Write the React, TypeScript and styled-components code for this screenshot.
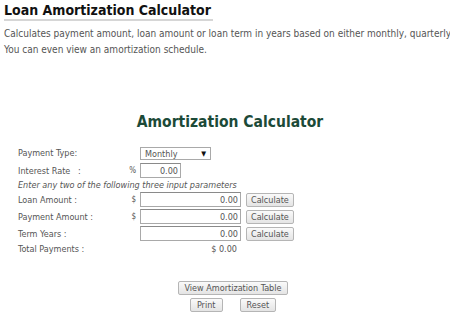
import React from "react";
import styled, { createGlobalStyle } from "styled-components";

const GlobalStyle = createGlobalStyle`
  html, body {
    margin: 0;
    padding: 0;
    background: #fff;
    overflow: hidden;
  }
  body {
    font-family: "DejaVu Sans Condensed", "DejaVu Sans", sans-serif;
    color: #555;
  }
`;

const Page = styled.main`
  width: 450px;
  height: 316px;
  padding: 0 0 0 4px;
  box-sizing: border-box;
  overflow: hidden;
`;

const Title = styled.h1`
  margin: 0;
  display: inline-block;
  font-size: 14px;
  font-weight: bold;
  color: #111;
  line-height: 16px;
  padding: 0 2px 1px 0;
  border-bottom: 2px solid #d6d6d6;
  white-space: nowrap;
`;

const Intro = styled.p`
  margin: 5px 0 0;
  font-size: 10px;
  line-height: 16px;
  color: #555;
  white-space: nowrap;
`;

const Calculator = styled.section`
  margin: 54px 0 0 14px;
  width: 424px;
`;

const Heading = styled.h2`
  margin: 0 0 13px;
  text-align: center;
  font-size: 15.5px;
  line-height: 20px;
  font-weight: bold;
  color: #1c4a38;
  white-space: nowrap;
`;

const Grid = styled.div`
  display: grid;
  grid-template-columns: 108px 14px auto 1fr;
  justify-items: start;
  align-items: center;
  row-gap: 2px;
  font-size: 9px;
  color: #555;
`;

const Label = styled.span`
  white-space: nowrap;
`;

const Unit = styled.span`
  justify-self: end;
  padding-right: 4px;
  font-size: 8px;
`;

const Note = styled.div`
  grid-column: 1 / -1;
  font-style: italic;
  font-size: 9px;
  color: #555;
  white-space: nowrap;
`;

const Field = styled.input<{ $w: number }>`
  width: ${(p) => p.$w}px;
  height: 15px;
  box-sizing: border-box;
  border: 1px solid #a9a9a9;
  border-top-color: #8a8a8a;
  padding: 0 2px;
  text-align: right;
  font-family: inherit;
  font-size: 9px;
  color: #555;
  background: #fff;
`;

const Select = styled.div`
  width: 71px;
  height: 13px;
  box-sizing: border-box;
  border: 1px solid #a9a9a9;
  display: flex;
  align-items: center;
  justify-content: space-between;
  padding: 0 4px;
  font-size: 9px;
  color: #555;
  margin: 2px 0 1px;
`;

const Arrow = styled.span`
  font-size: 7px;
  color: #111;
`;

const Button = styled.button<{ $pad?: number }>`
  font-family: inherit;
  font-size: 9px;
  color: #555;
  height: 14px;
  padding: 0 ${(p) => p.$pad ?? 5}px;
  border: 1px solid #b5b5b5;
  border-radius: 2px;
  background: linear-gradient(#fafafa, #e4e4e4);
  line-height: 12px;
  cursor: pointer;
  white-space: nowrap;
`;

const CalcButton = styled(Button)`
  margin-left: 5px;
`;

const Total = styled.span`
  grid-column: 3 / 4;
  justify-self: end;
  padding-right: 4px;
  margin-top: 1px;
`;

const TotalLabel = styled(Label)`
  margin-top: 1px;
`;

const Actions = styled.div`
  display: flex;
  flex-direction: column;
  align-items: center;
  gap: 3px;
  margin-top: 27px;
  padding-left: 6px;
`;

const ActionRow = styled.div`
  display: flex;
  gap: 17px;
`;

const Empty = styled.span``;

export default function App() {
  return (
    <Page>
      <GlobalStyle />
      <Title>Loan Amortization Calculator</Title>
      <Intro>
        Calculates payment amount, loan amount or loan term in years based on either monthly, quarterly, semi-annual or annual payments.
        <br />
        You can even view an amortization schedule.
      </Intro>
      <Calculator>
        <Heading>Amortization Calculator</Heading>
        <Grid>
          <Label>Payment Type:</Label>
          <Empty />
          <Select>
            Monthly <Arrow>▼</Arrow>
          </Select>
          <Empty />

          <Label>Interest Rate&nbsp;&nbsp;&nbsp;:</Label>
          <Unit>%</Unit>
          <Field $w={41} defaultValue="0.00" />
          <Empty />

          <Note>Enter any two of the following three input parameters</Note>

          <Label>Loan Amount :</Label>
          <Unit>$</Unit>
          <Field $w={101} defaultValue="0.00" />
          <CalcButton $pad={4}>Calculate</CalcButton>

          <Label>Payment Amount :</Label>
          <Unit>$</Unit>
          <Field $w={101} defaultValue="0.00" />
          <CalcButton $pad={4}>Calculate</CalcButton>

          <Label>Term Years :</Label>
          <Empty />
          <Field $w={101} defaultValue="0.00" />
          <CalcButton $pad={4}>Calculate</CalcButton>

          <TotalLabel>Total Payments :</TotalLabel>
          <Empty />
          <Total>$ 0.00</Total>
        </Grid>
        <Actions>
          <Button $pad={6}>View Amortization Table</Button>
          <ActionRow>
            <Button $pad={6}>Print</Button>
            <Button $pad={6}>Reset</Button>
          </ActionRow>
        </Actions>
      </Calculator>
    </Page>
  );
}
